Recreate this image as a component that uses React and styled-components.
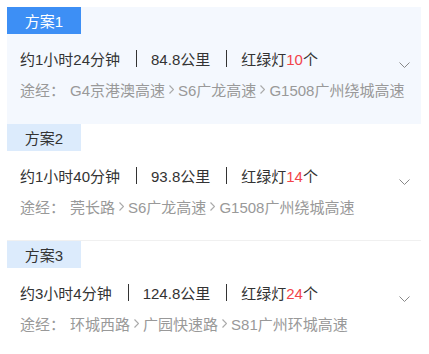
import React from "react";
import styled, { createGlobalStyle } from "styled-components";

const GlobalStyle = createGlobalStyle`
  body {
    margin: 0;
    background: #fff;
    font-family: "Liberation Sans", "Noto Sans CJK SC", sans-serif;
  }
`;

const List = styled.div`
  width: 414px;
  padding: 7px 0 0 7px;
`;

const Card = styled.div`
  background: ${(p) => (p.active ? "#f4f8fe" : "#fff")};
  border-bottom: 1px solid ${(p) => (p.active ? "#f4f8fe" : "#f0f0f0")};
  padding-bottom: 22px;
`;

const Tag = styled.div`
  width: 74px;
  height: 27px;
  display: flex;
  align-items: center;
  justify-content: center;
  font-size: 15px;
  background: ${(p) => (p.active ? "#3d8ff5" : "#dcebfc")};
  color: ${(p) => (p.active ? "#fff" : "#333")};
`;

const Body = styled.div`
  display: flex;
  align-items: flex-start;
  padding: 12px 11px 0 13px;
`;

const Info = styled.div`
  flex: 1;
  min-width: 0;
  display: flex;
  flex-direction: column;
  gap: 7px;
`;

const Summary = styled.div`
  display: flex;
  align-items: center;
  height: 24px;
  font-size: 15px;
  color: #333;
`;

const Divider = styled.span`
  width: 1px;
  height: 17px;
  background: #333;
  margin: 0 14px 0 16px;
`;

const Red = styled.span`
  color: #f2434a;
`;

const Via = styled.div`
  display: flex;
  align-items: center;
  height: 24px;
  font-size: 15px;
  color: #999;
  white-space: nowrap;
`;

const ViaLabel = styled.span`
  width: 50px;
  flex-shrink: 0;
`;

const Sep = styled.svg`
  width: 5px;
  height: 9px;
  margin: 0 4px;
  flex-shrink: 0;
`;

const Chevron = styled.svg`
  width: 11px;
  height: 7px;
  margin-top: 16px;
  flex-shrink: 0;
`;

const plans = [
  {
    name: "方案1",
    time: "约1小时24分钟",
    dist: "84.8公里",
    lights: "10",
    via: ["G4京港澳高速", "S6广龙高速", "G1508广州绕城高速"],
  },
  {
    name: "方案2",
    time: "约1小时40分钟",
    dist: "93.8公里",
    lights: "14",
    via: ["莞长路", "S6广龙高速", "G1508广州绕城高速"],
  },
  {
    name: "方案3",
    time: "约3小时4分钟",
    dist: "124.8公里",
    lights: "24",
    via: ["环城西路", "广园快速路", "S81广州环城高速"],
  },
];

const App = () => {
  return (
    <List>
      <GlobalStyle />
      {plans.map((p, i) => (
        <Card key={p.name} active={i === 0}>
          <Tag active={i === 0}>{p.name}</Tag>
          <Body>
            <Info>
              <Summary>
                <span>{p.time}</span>
                <Divider />
                <span>{p.dist}</span>
                <Divider />
                <span>
                  红绿灯<Red>{p.lights}</Red>个
                </span>
              </Summary>
              <Via>
                <ViaLabel>途经：</ViaLabel>
                {p.via.map((v, j) => (
                  <React.Fragment key={v}>
                    {j > 0 && (
                      <Sep viewBox="0 0 5 9">
                        <path d="M0.5 0.5 L4.5 4.5 L0.5 8.5" fill="none" stroke="#aaa" strokeWidth="1.2" />
                      </Sep>
                    )}
                    <span>{v}</span>
                  </React.Fragment>
                ))}
              </Via>
            </Info>
            <Chevron viewBox="0 0 11 7">
              <path d="M0.5 0.5 L5.5 5.5 L10.5 0.5" fill="none" stroke="#888" strokeWidth="1" />
            </Chevron>
          </Body>
        </Card>
      ))}
    </List>
  );
};

export default App;
